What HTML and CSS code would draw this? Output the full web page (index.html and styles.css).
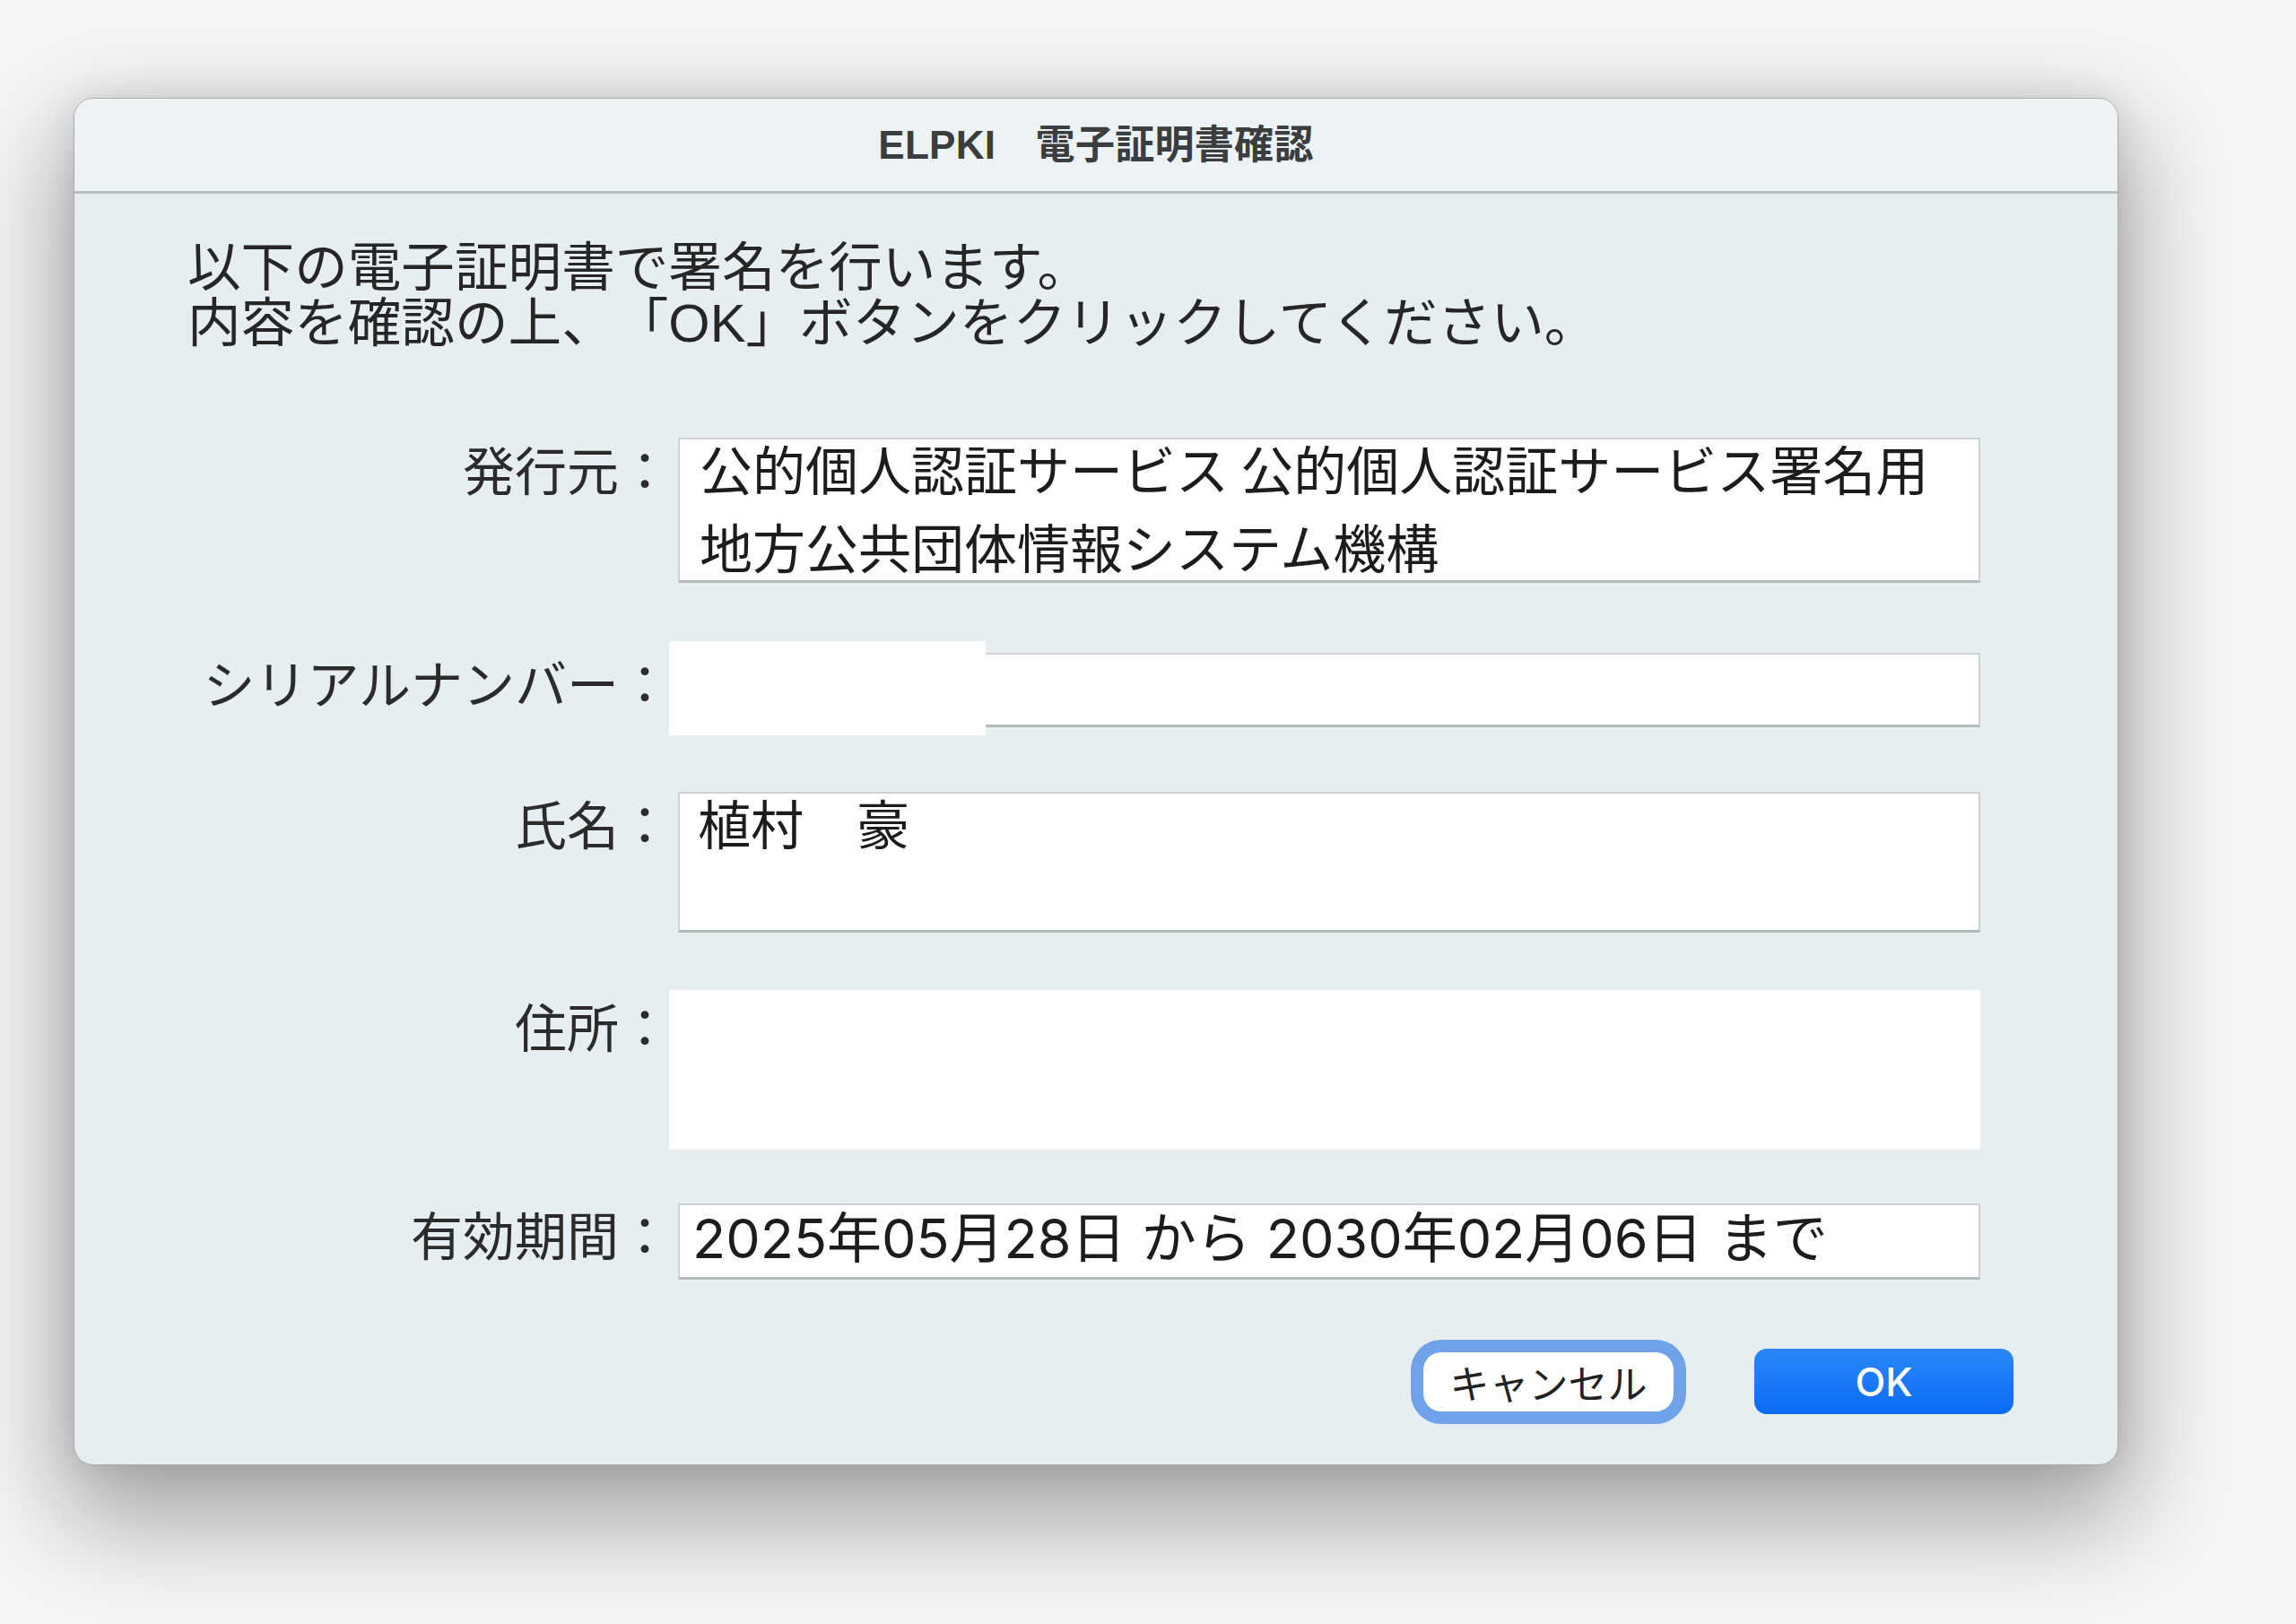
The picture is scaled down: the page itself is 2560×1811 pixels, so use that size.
FILE: index.html
```html
<!DOCTYPE html>
<html lang="ja">
<head>
<meta charset="utf-8">
<title>ELPKI 電子証明書確認</title>
<link rel="stylesheet" href="styles.css">
</head>
<body>
<div class="window">
  <div class="titlebar"><span class="title">ELPKI　電子証明書確認</span></div>
  <div class="content">
    <p class="intro">以下の電子証明書で署名を行います。<br>内容を確認の上、「OK」ボタンをクリックしてください。</p>

    <div class="row row-issuer">
      <div class="label">発行元：</div>
      <div class="field field-issuer">
        <div class="line">公的個人認証サービス 公的個人認証サービス署名用</div>
        <div class="line">地方公共団体情報システム機構</div>
      </div>
    </div>

    <div class="row row-serial">
      <div class="label">シリアルナンバー：</div>
      <div class="field field-serial"><div class="redact"></div></div>
    </div>

    <div class="row row-name">
      <div class="label">氏名：</div>
      <div class="field field-name">
        <div class="line">植村　豪</div>
      </div>
    </div>

    <div class="row row-address">
      <div class="label">住所：</div>
      <div class="field-redacted"></div>
    </div>

    <div class="row row-validity">
      <div class="label">有効期間：</div>
      <div class="field field-validity">
        <div class="date">2025年05月28日 から 2030年02月06日 まで</div>
      </div>
    </div>

    <div class="buttons">
      <button class="btn btn-cancel" type="button">キャンセル</button>
      <button class="btn btn-ok" type="button">OK</button>
    </div>
  </div>
</div>
</body>
</html>
```

FILE: styles.css
```css
html, body {
  margin: 0;
  padding: 0;
}

body {
  width: 2560px;
  height: 1811px;
  overflow: hidden;
  background: #f6f6f6;
  font-family: "Noto Sans CJK JP", "Noto Sans", sans-serif;
  color: #222;
  text-spacing-trim: space-all;
}

.window {
  box-sizing: border-box;
  margin: 109px 0 0 82px;
  width: 2280px;
  height: 1525px;
  border: 1px solid #a7abad;
  border-radius: 22px;
  overflow: hidden;
  background: #e7eef1;
  display: flex;
  flex-direction: column;
  box-shadow:
    0 48px 115px 14px rgba(0, 0, 0, 0.34),
    0 0 36px rgba(0, 0, 0, 0.10);
}

.titlebar {
  flex: none;
  height: 103px;
  border-bottom: 3px solid #bac1c4;
  background: #edf3f5;
  display: flex;
  align-items: center;
  justify-content: center;
}

.title {
  font-family: "Liberation Sans", "Noto Sans CJK JP", sans-serif;
  font-weight: 700;
  font-size: 44px;
  color: #3b3d3f;
  line-height: 1;
  letter-spacing: 0.3px;
}

.content {
  flex: 1;
  padding: 52px 153px 0 126px;
  display: flex;
  flex-direction: column;
}

.intro {
  margin: 0;
  font-family: "Liberation Sans", "Noto Sans CJK JP", sans-serif;
  font-size: 59.6px;
  line-height: 62px;
  color: #262626;
  white-space: nowrap;
}

.row {
  display: flex;
  align-items: flex-start;
  gap: 8px;
}

.label {
  flex: none;
  width: 539px;
  text-align: right;
  font-size: 58px;
  line-height: 64px;
  color: #2b2b2b;
  white-space: nowrap;
}

.field {
  box-sizing: border-box;
  flex: 1;
  background: #fff;
  border: 2px solid #cdd2d5;
  border-bottom: 3px solid #b5babd;
  font-size: 59px;
  line-height: 64px;
  color: #1c1c1c;
  white-space: nowrap;
}

.row-issuer { margin-top: 96px; }
.row-issuer .label { padding-top: 2px; }
.field-issuer {
  height: 162px;
  padding-left: 22px;
  display: flex;
  flex-direction: column;
  gap: 23px;
}

.row-serial { margin-top: 78px; }
.field-serial {
  height: 83px;
  position: relative;
}
.redact {
  position: absolute;
  left: -12px;
  top: -15px;
  width: 353px;
  height: 105px;
  background: #fff;
}

.row-name { margin-top: 72px; }
.row-name .label { padding-top: 2px; }
.field-name {
  height: 157px;
  padding-left: 20px;
}

.row-address { margin-top: 64px; }
.row-address .label { padding-top: 7px; }
.field-redacted {
  flex: 1;
  height: 178px;
  margin-left: -10px;
  background: #fff;
}

.row-validity { margin-top: 60px; }
.row-validity .label { padding-top: 1px; }
.field-validity {
  height: 85px;
  padding: 5px 0 0 14px;
}
.date {
  font-family: "Inter", "Noto Sans CJK JP", sans-serif;
  font-size: 61px;
  line-height: 64px;
}

.buttons {
  margin-top: 77px;
  margin-right: -37px;
  display: flex;
  justify-content: flex-end;
  align-items: center;
  gap: 90px;
}

.btn {
  box-sizing: border-box;
  border: none;
  padding: 0;
  font-family: "Noto Sans CJK JP", sans-serif;
  font-size: 44px;
  line-height: 1;
  cursor: default;
}

.btn-cancel {
  width: 279px;
  height: 66px;
  border-radius: 20px;
  background: #fff;
  color: #222;
  box-shadow: 0 0 0 14px #70a2e9;
}

.btn-ok {
  width: 289px;
  height: 73px;
  border-radius: 14px;
  background: linear-gradient(#2a87f9, #0a6cf5);
  color: #fff;
  font-family: "Inter", "Noto Sans CJK JP", sans-serif;
  font-weight: 500;
}
```
